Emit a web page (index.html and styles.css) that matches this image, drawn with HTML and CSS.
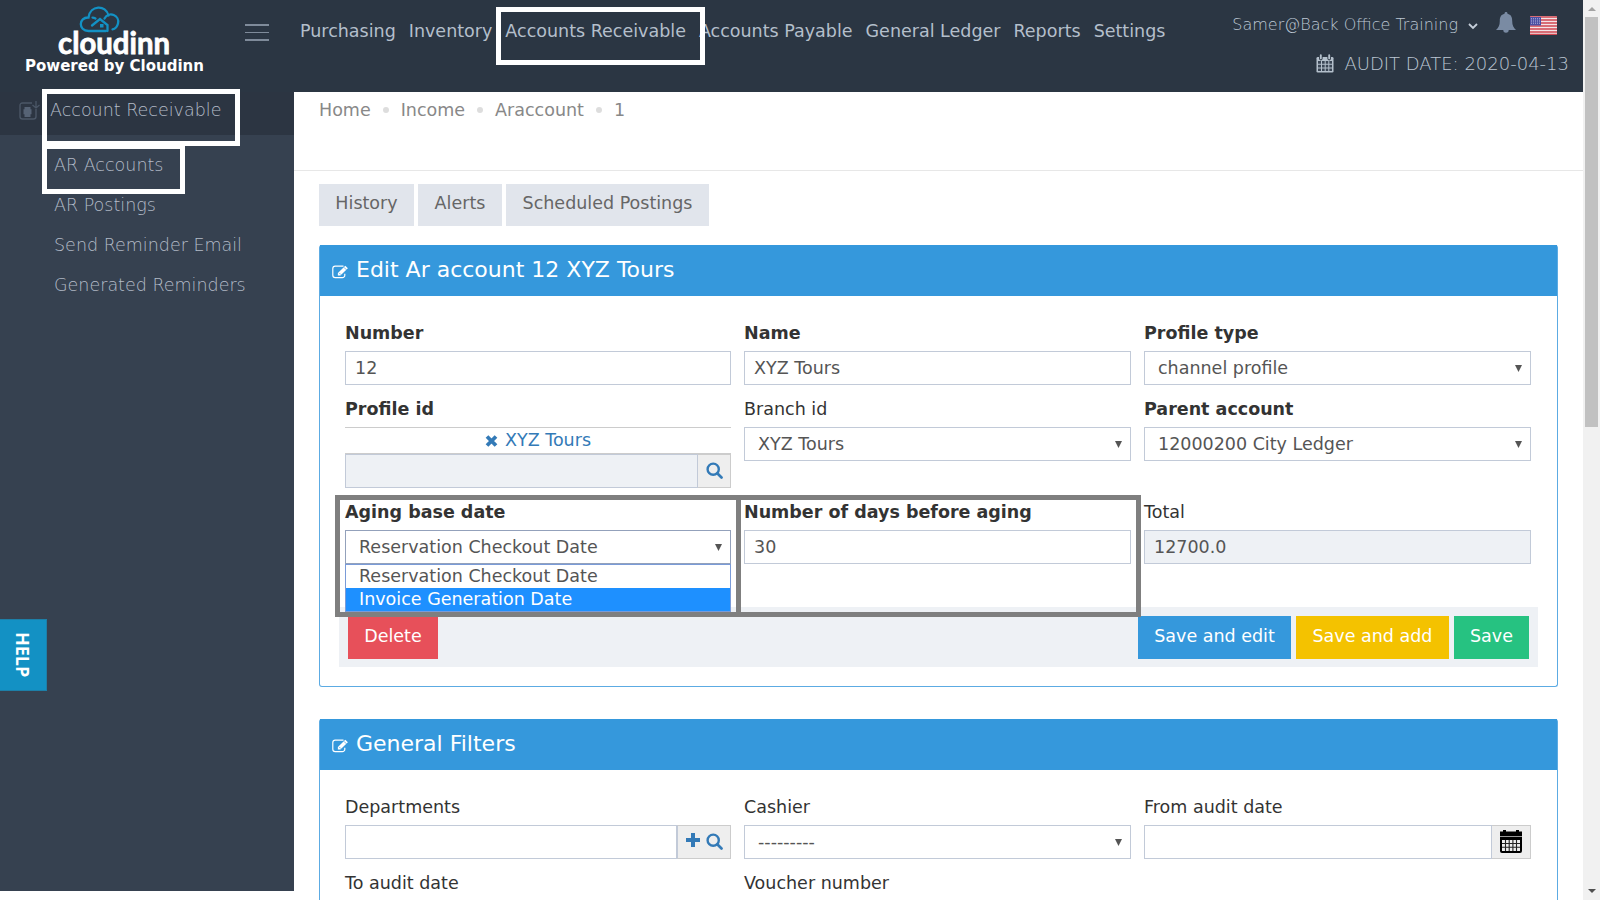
FILE: index.html
```html
<!DOCTYPE html>
<html lang="en">
<head>
<meta charset="utf-8">
<title>Edit Ar account</title>
<link rel="stylesheet" href="styles.css">
</head>
<body>
<svg class="defs" aria-hidden="true">
  <symbol id="edit" viewBox="0 0 17 14"><path d="M11.5 1.2H3.2A2.4 2.4 0 0 0 .8 3.600v6.600a2.400 2.400 0 0 0 2.400 2.400h7.200a2.400 2.400 0 0 0 2.400-2.400V8.800" fill="none" stroke="currentColor" stroke-width="1.200"/><path d="M13.300.8l2.600 2.500-7.500 7.300H5.900V8.100z" fill="currentColor"/><path d="M7.300 8l1.500 1.500M11.900 2.300l2.500 2.500" stroke="#3598dc" stroke-width=".7"/></symbol>
  <symbol id="search" viewBox="0 0 17 17"><circle cx="7.200" cy="7.200" r="5.600" fill="none" stroke="currentColor" stroke-width="2.400"/><path d="M11.500 11.500l4 4" stroke="currentColor" stroke-width="2.700" stroke-linecap="round"/></symbol>
  <symbol id="arrow" viewBox="0 0 7 7"><path d="M0 0h7L3.500 7z" fill="currentColor"/></symbol>
</svg>
<div class="page">
  <header class="header">
    <div class="brand">
      <svg class="logo" viewBox="0 0 120 56" width="120" height="56">
        <g fill="none" stroke="#1391c4" stroke-width="2.300" stroke-linecap="round">
          <path d="M52 31h-17.500C24 31 24.500 17 34.500 17.500 36 5 52 4.500 54.500 15.500"/>
          <path d="M38.500 17.600q1.500 0 3 .9M50.500 18.500C55 10.500 66 15.500 64 23.500 63 27.500 61 29 58.500 29.300"/>
          <path d="M38 25.500l8-6.500 7.500 6V31"/>
        </g>
        <rect x="46" y="24" width="3.500" height="3.500" fill="#1391c4"/>
        <text class="logo-text" x="4" y="54" textLength="112" lengthAdjust="spacingAndGlyphs">cloudinn</text>
      </svg>
      <div class="powered">Powered by Cloudinn</div>
    </div>
    <div class="burger"><i></i><i></i><i></i></div>
    <nav class="nav">
      <a>Purchasing</a><a>Inventory</a><a class="marked">Accounts Receivable</a><a>Accounts Payable</a><a>General Ledger</a><a>Reports</a><a>Settings</a>
    </nav>
    <div class="tools">
      <div class="user"><span class="user-name">Samer@Back Office Training</span>
        <svg class="chev" width="10" height="7" viewBox="0 0 10 7"><path d="M1 1l4 4 4-4" fill="none" stroke="#c6cfda" stroke-width="1.800"/></svg>
        <svg class="bell" width="20" height="22" viewBox="0 0 20 22"><path d="M10 0c1 0 1.500.7 1.500 1.700C15 2.500 16.200 5 16.200 9c0 4.500 1.300 6.700 3.800 9h-7.300a2.700 2.700 0 0 1-5.400 0H0c2.500-2.300 3.800-4.500 3.800-9 0-4 1.200-6.500 4.700-7.300C8.500.7 9 0 10 0z" fill="#7a8ba3"/></svg>
        <svg class="flag" width="27" height="19" viewBox="0 0 27 19"><rect width="27" height="19" rx="1" fill="#f3e4e6"/><path d="M0 1h27M0 4h27M0 7h27M0 10h27M0 13h27M0 16h27M0 18.500h27" stroke="#cf4650" stroke-width="1.400"/><rect y="1" width="11" height="8.500" fill="#4a4fa3"/><path d="M1 2.800h10M1 5h10M1 7.200h10" stroke="#b9bce0" stroke-width="1" stroke-dasharray="1 1"/></svg>
      </div>
      <div class="audit">
        <svg width="18" height="19" viewBox="0 0 18 19"><path d="M1.800 3h14.400q1.300 0 1.300 1.300v12.900q0 1.300-1.300 1.300H1.800Q.5 18.500.5 17.200V4.300Q.5 3 1.800 3z" fill="#b4c0cc"/><path d="M2 7h3v2.800H2zM6 7h2.700v2.800H6zM9.700 7h2.600v2.800H9.700zM13.300 7H16v2.800h-2.700zM2 10.800h3v2.800H2zM6 10.800h2.700v2.800H6zM9.700 10.800h2.600v2.800H9.700zM13.300 10.800H16v2.800h-2.700zM2 14.600h3v2.400H2zM6 14.600h2.700V17H6zM9.700 14.600h2.600V17H9.700zM13.300 14.600H16V17h-2.700z" fill="#3a4655"/><path d="M4.800 1v3.600M13.200 1v3.600" stroke="#2b3643" stroke-width="3.600" stroke-linecap="round"/><path d="M4.800 1.200v3.200M13.200 1.200v3.200" stroke="#b4c0cc" stroke-width="1.900" stroke-linecap="round"/></svg>
        <span>AUDIT DATE: 2020-04-13</span>
      </div>
    </div>
  </header>
  <div class="main">
    <aside class="side">
      <div class="side-head">
        <svg width="21" height="20" viewBox="0 0 21 20"><path d="M13 2H3.500Q1 2 1 4.500v11Q1 18 3.500 18h11q2.500 0 2.500-2.500V8" fill="none" stroke="#4b5767" stroke-width="1.400"/><path d="M5.500 6h6v2.200h1v5h-1V16h-6v-2.800h-1v-5h1z" fill="#566375"/><path d="M17 0v6M13.500 4l3.500 3 3.500-3" fill="none" stroke="#4b5767" stroke-width="1.300"/></svg>
        <a>Account Receivable</a>
      </div>
      <div class="side-list"><a class="marked">AR Accounts</a><a>AR Postings</a><a>Send Reminder Email</a><a>Generated Reminders</a></div>
    </aside>
    <main class="content">
      <div class="crumbs"><span class="c1">Home</span><i></i><span class="c2">Income</span><i></i><span class="c3">Araccount</span><i></i><span>1</span></div>
      <div class="tabs"><a class="t1">History</a><a class="t2">Alerts</a><a class="t3">Scheduled Postings</a></div>
      <section class="panel first">
        <h2><svg width="17" height="14"><use href="#edit"/></svg><span>Edit Ar account 12 XYZ Tours</span></h2>
        <div class="body">
          <div class="row r1">
            <div class="field"><label class="req">Number</label><div class="input">12</div></div>
            <div class="field"><label class="req">Name</label><div class="input">XYZ Tours</div></div>
            <div class="field"><label class="req">Profile type</label><div class="input select">channel profile<svg><use href="#arrow"/></svg></div></div>
          </div>
          <div class="row r2">
            <div class="field"><label class="req">Profile id</label>
              <div class="chosen"><svg width="13" height="12" viewBox="0 0 13 12"><path d="M2 1.500l9 9M11 1.500l-9 9" stroke="#337ab7" stroke-width="3.800"/></svg><span>XYZ Tours</span></div>
              <div class="group lookup"><div class="input off"></div><div class="addon"><svg width="17" height="17"><use href="#search"/></svg></div></div></div>
            <div class="field"><label>Branch id</label><div class="input select">XYZ Tours<svg><use href="#arrow"/></svg></div></div>
            <div class="field"><label class="req">Parent account</label><div class="input select">12000200 City Ledger<svg><use href="#arrow"/></svg></div></div>
          </div>
          <div class="row r3">
            <div class="field"><label class="req">Aging base date</label><div class="input select open">Reservation Checkout Date<svg><use href="#arrow"/></svg></div>
              <div class="menu"><div class="opt">Reservation Checkout Date</div><div class="opt on">Invoice Generation Date</div></div></div>
            <div class="field"><label class="req days">Number of days before aging</label><div class="input">30</div></div>
            <div class="field"><label>Total</label><div class="input off">12700.0</div></div>
            <div class="frame f1"></div><div class="frame f2"></div>
          </div>
          <div class="actions"><a class="btn del">Delete</a><a class="btn edit">Save and edit</a><a class="btn add">Save and add</a><a class="btn save">Save</a></div>
        </div>
      </section>
      <section class="panel second">
        <h2><svg width="17" height="14"><use href="#edit"/></svg><span>General Filters</span></h2>
        <div class="body">
          <div class="row r1">
            <div class="field"><label>Departments</label><div class="group"><div class="input"></div><div class="addon wide"><svg width="14" height="14" viewBox="0 0 14 14"><path d="M7 0v14M0 7h14" stroke="currentColor" stroke-width="4"/></svg><svg width="17" height="17"><use href="#search"/></svg></div></div></div>
            <div class="field"><label>Cashier</label><div class="input select">---------<svg><use href="#arrow"/></svg></div></div>
            <div class="field"><label>From audit date</label><div class="group"><div class="input"></div><div class="addon cal"><svg width="22" height="23" viewBox="0 0 22 23"><path d="M3 1.500V0h3v1.500h10V0h3v1.500h3V21q0 2-2 2H2q-2 0-2-2V1.500z" fill="#000"/><path d="M0 6.500h22" stroke="#999" stroke-width="1"/><path d="M2 10h18v11H2z" fill="#eee"/><path d="M2 13.500h18M2 17.300h18M5.500 10v11M9.200 10v11M12.900 10v11M16.500 10v11" stroke="#222" stroke-width="1.100"/></svg></div></div></div>
          </div>
          <div class="row r2">
            <div class="field"><label>To audit date</label></div>
            <div class="field"><label>Voucher number</label></div>
          </div>
        </div>
      </section>
    </main>
  </div>
  <div class="help">HELP</div>
</div>
<div class="scroll"><i class="up"></i><i class="thumb"></i><i class="down"></i></div>
</body>
</html>
```
FILE: styles.css
```css
* { box-sizing: border-box; }
body { margin: 0; width: 1600px; height: 900px; overflow: hidden; display: flex; background: #fff; font: 17.5px/24px "DejaVu Sans", sans-serif; color: #333; }
.defs { position: absolute; width: 0; height: 0; }
svg { display: block; flex: none; }
a, span, label { white-space: nowrap; }
.page { width: 1583px; height: 900px; overflow: hidden; position: relative; }

.header { height: 92px; background: #2b3643; display: flex; color: #b4bfcb; }
.brand { width: 229px; padding-left: 25px; }
.logo { margin-left: 29px; overflow: visible; }
.logo-text { font: 700 31px Lato, sans-serif; fill: #fff; stroke: #fff; stroke-width: .8; }
.powered { font-weight: 700; font-size: 15px; line-height: 20px; color: #fff; }
.burger { width: 40px; margin-left: 16px; padding-top: 24px; }
.burger i { display: block; width: 24px; height: 2px; background: #7f8b9a; margin-bottom: 6px; }
.burger i:nth-child(2) { height: 1px; }
.burger i:nth-child(1) { margin-bottom: 6px; }
.nav { display: flex; padding: 19px 0 0 15px; gap: 13px; }
.marked { position: relative; }
.nav .marked::after { content: ""; position: absolute; left: -9px; top: -12px; width: 199px; height: 48px; border: 5px solid #fff; }
.tools { margin-left: auto; padding-right: 14px; font-weight: 200; color: #bcc7d3; }
.user { display: flex; padding: 12px 12px 0 0; justify-content: flex-end; font-size: 16px; line-height: 26px; }
.chev { margin: 11px 18px 0 10px; }
.flag { margin: 4px 0 0 14px; }
.audit { display: flex; gap: 10px; justify-content: flex-end; padding-top: 14px; font-size: 18px; }
.audit svg { margin-top: 2px; }

.main { display: flex; height: 808px; }
.side { width: 294px; height: 799px; background: #364150; font-weight: 200; color: #b4bcc8; }
.side-head { height: 43px; background: #2c3542; display: flex; position: relative; padding: 6px 0 0 19px; }
.side-head svg { margin-top: 3px; }
.side-head a { margin-left: 10px; }
.side-head::after { content: ""; position: absolute; left: 42px; top: -3px; width: 188px; height: 47px; border: 5px solid #fff; }
.side-list { display: flex; flex-direction: column; align-items: flex-start; gap: 16px; padding: 18px 0 0 54px; }
.side-list .marked::after { content: ""; position: absolute; left: -12px; top: -9px; width: 133px; height: 40px; border: 5px solid #fff; }

.content { flex: 1; }
.crumbs { height: 79px; border-bottom: 1px solid #e7e7e7; padding: 6px 0 0 25px; display: flex; color: #888; }
.crumbs i { width: 6px; height: 6px; border-radius: 50%; background: #ddd; margin: 9px 12px 0; }
.tabs { display: flex; gap: 4px; padding: 13px 0 0 25px; }
.tabs a { height: 42px; line-height: 39px; background: #e1e5ec; color: #666; text-align: center; }
.t1 { width: 95px; } .t2 { width: 84px; } .t3 { width: 203px; }
.panel { width: 1239px; margin-left: 25px; border: 1px solid #5cabe3; border-top: 0; border-radius: 3px; }
.first { margin-top: 19px; height: 442px; }
.second { margin-top: 32px; height: 300px; }
.panel h2 { margin: 0; height: 51px; background: #3598dc; color: #fff; font-weight: 400; font-size: 22px; line-height: 50px; display: flex; padding-left: 12px; gap: 7px; }
.panel h2 svg { margin-top: 20px; }
.body { padding: 26px 26px 0 25px; }
.row { display: grid; grid-template-columns: 386px 387px 387px; column-gap: 13px; position: relative; }
.r1 { height: 76px; } .r2 { height: 103px; } .r3 { height: 106px; }
label { display: block; height: 29px; line-height: 22px; color: #333; }
.req { font-weight: 700; }
.input { height: 34px; border: 1px solid #c2cad8; padding-left: 9px; line-height: 33px; color: #555; background: #fff; white-space: nowrap; }
.select { display: flex; justify-content: space-between; padding: 0 8px 0 13px; }
.select svg { width: 7px; height: 7px; margin-top: 13px; }
.off { background: #eef1f5; }
.open { border-color: #93a1bb; }
.chosen { height: 27px; border-top: 1px solid #ccc; border-bottom: 1px solid #ccc; display: flex; justify-content: center; gap: 7px; color: #337ab7; line-height: 24px; }
.chosen svg { margin-top: 7px; }
.group { display: flex; }
.group .input { flex: 1; }
.addon { width: 33px; border: 1px solid #ccc; border-left: 0; background: #eee; color: #337ab7; display: flex; justify-content: center; padding-top: 7px; }
.wide { width: 54px; gap: 6px; border-left: 1px solid #c2cad8; }
.cal { width: 39px; padding-top: 4px; }
.menu { height: 48px; border: 1px solid #7a9bd8; background: #fff; line-height: 23px; color: #555; }
.opt { height: 23px; padding-left: 13px; white-space: nowrap; }
.on { background: #1e90ff; color: #fff; }
.frame { position: absolute; top: -6px; height: 122px; border: 5px solid #7f7f7f; z-index: 2; }
.f1 { left: -10px; width: 406px; }
.f2 { left: 391px; width: 405px; }
.actions { height: 60px; width: 1199px; margin-left: -6px; background: #eef1f5; display: flex; gap: 5px; padding: 9px; }
.btn { height: 43px; line-height: 41px; color: #fff; text-align: center; }
.del { width: 90px; background: #e7505a; margin-right: auto; }
.edit { width: 153px; background: #3598dc; }
.add { width: 153px; background: #f4c200; }
.save { width: 75px; background: #26c281; }
.help { position: absolute; left: 0; top: 619px; width: 47px; height: 72px; background: #1391c4; border: 1px solid #1d7fa8; border-left: 0; color: #fff; writing-mode: vertical-rl; text-align: center; font: 700 18px/46px "Open Sans", sans-serif; }

.scroll { width: 17px; height: 900px; background: #f1f1f1; display: flex; flex-direction: column; align-items: center; }
.scroll i { display: block; }
.up { margin-top: 7px; border: 4px solid transparent; border-top: 0; border-bottom-color: #a3a3a3; }
.thumb { width: 13px; height: 410px; margin-top: 6px; background: #c1c1c1; }
.down { margin-top: 462px; border: 4px solid transparent; border-bottom: 0; border-top-color: #505050; }
```
